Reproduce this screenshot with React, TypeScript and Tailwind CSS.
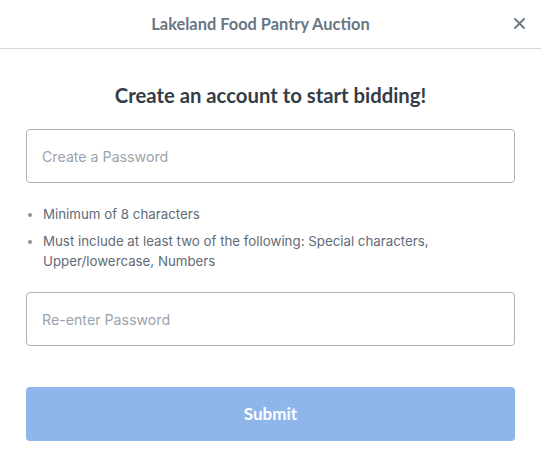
import { useState } from 'react';

const heading = { fontFamily: 'Lato, "Open Sans", sans-serif' };
const body = { fontFamily: 'Inter, "Liberation Sans", sans-serif' };

export default function App() {
  const [pw, setPw] = useState('');
  const [pw2, setPw2] = useState('');
  const input =
    'h-[54px] w-full rounded-[4px] border border-[#aab3bd] bg-white px-[15px] text-[14.2px] text-[#333d47] outline-none placeholder:text-[#9aa3ad]';

  return (
    <div className="min-h-[468px] w-[541px] bg-white">
      <div className="relative flex h-[49px] items-center justify-center border-b border-[#d3d9df] pr-[20px]">
        <h2 className="text-[16.4px] font-bold text-[#687684]" style={heading}>Lakeland Food Pantry Auction</h2>
        <button className="absolute right-[15px] top-[16px] flex h-[14px] w-[14px] items-center justify-center text-[#6b7783]" aria-label="Close">
          <svg width="11" height="11" viewBox="0 0 11 11" stroke="currentColor" strokeWidth="1.8" strokeLinecap="round">
            <path d="M1 1l9 9M10 1l-9 9" />
          </svg>
        </button>
      </div>

      <div className="px-[26px] pt-[32px]">
        <h1 className="text-center text-[20.3px] leading-[28px] font-bold text-[#333d47]" style={heading}>Create an account to start bidding!</h1>

        <input type="password" value={pw} onChange={(e) => setPw(e.target.value)} placeholder="Create a Password" className={`${input} mt-[20px]`} style={body} />

        <ul className="mt-[21px] space-y-[7px] pl-[17px] text-[13.3px] leading-[20px] text-[#5f6b77]" style={body}>
          <li className="list-disc marker:text-[#8a949e]">Minimum of 8 characters</li>
          <li className="list-disc marker:text-[#8a949e]">Must include at least two of the following: Special characters, Upper/lowercase, Numbers</li>
        </ul>

        <input type="password" value={pw2} onChange={(e) => setPw2(e.target.value)} placeholder="Re-enter Password" className={`${input} mt-[21px]`} style={body} />

        <button className="mt-[41px] h-[54px] w-full rounded-[4px] bg-[#8fb6ea] text-[17px] font-bold text-white" style={heading}>Submit</button>
      </div>
    </div>
  );
}
